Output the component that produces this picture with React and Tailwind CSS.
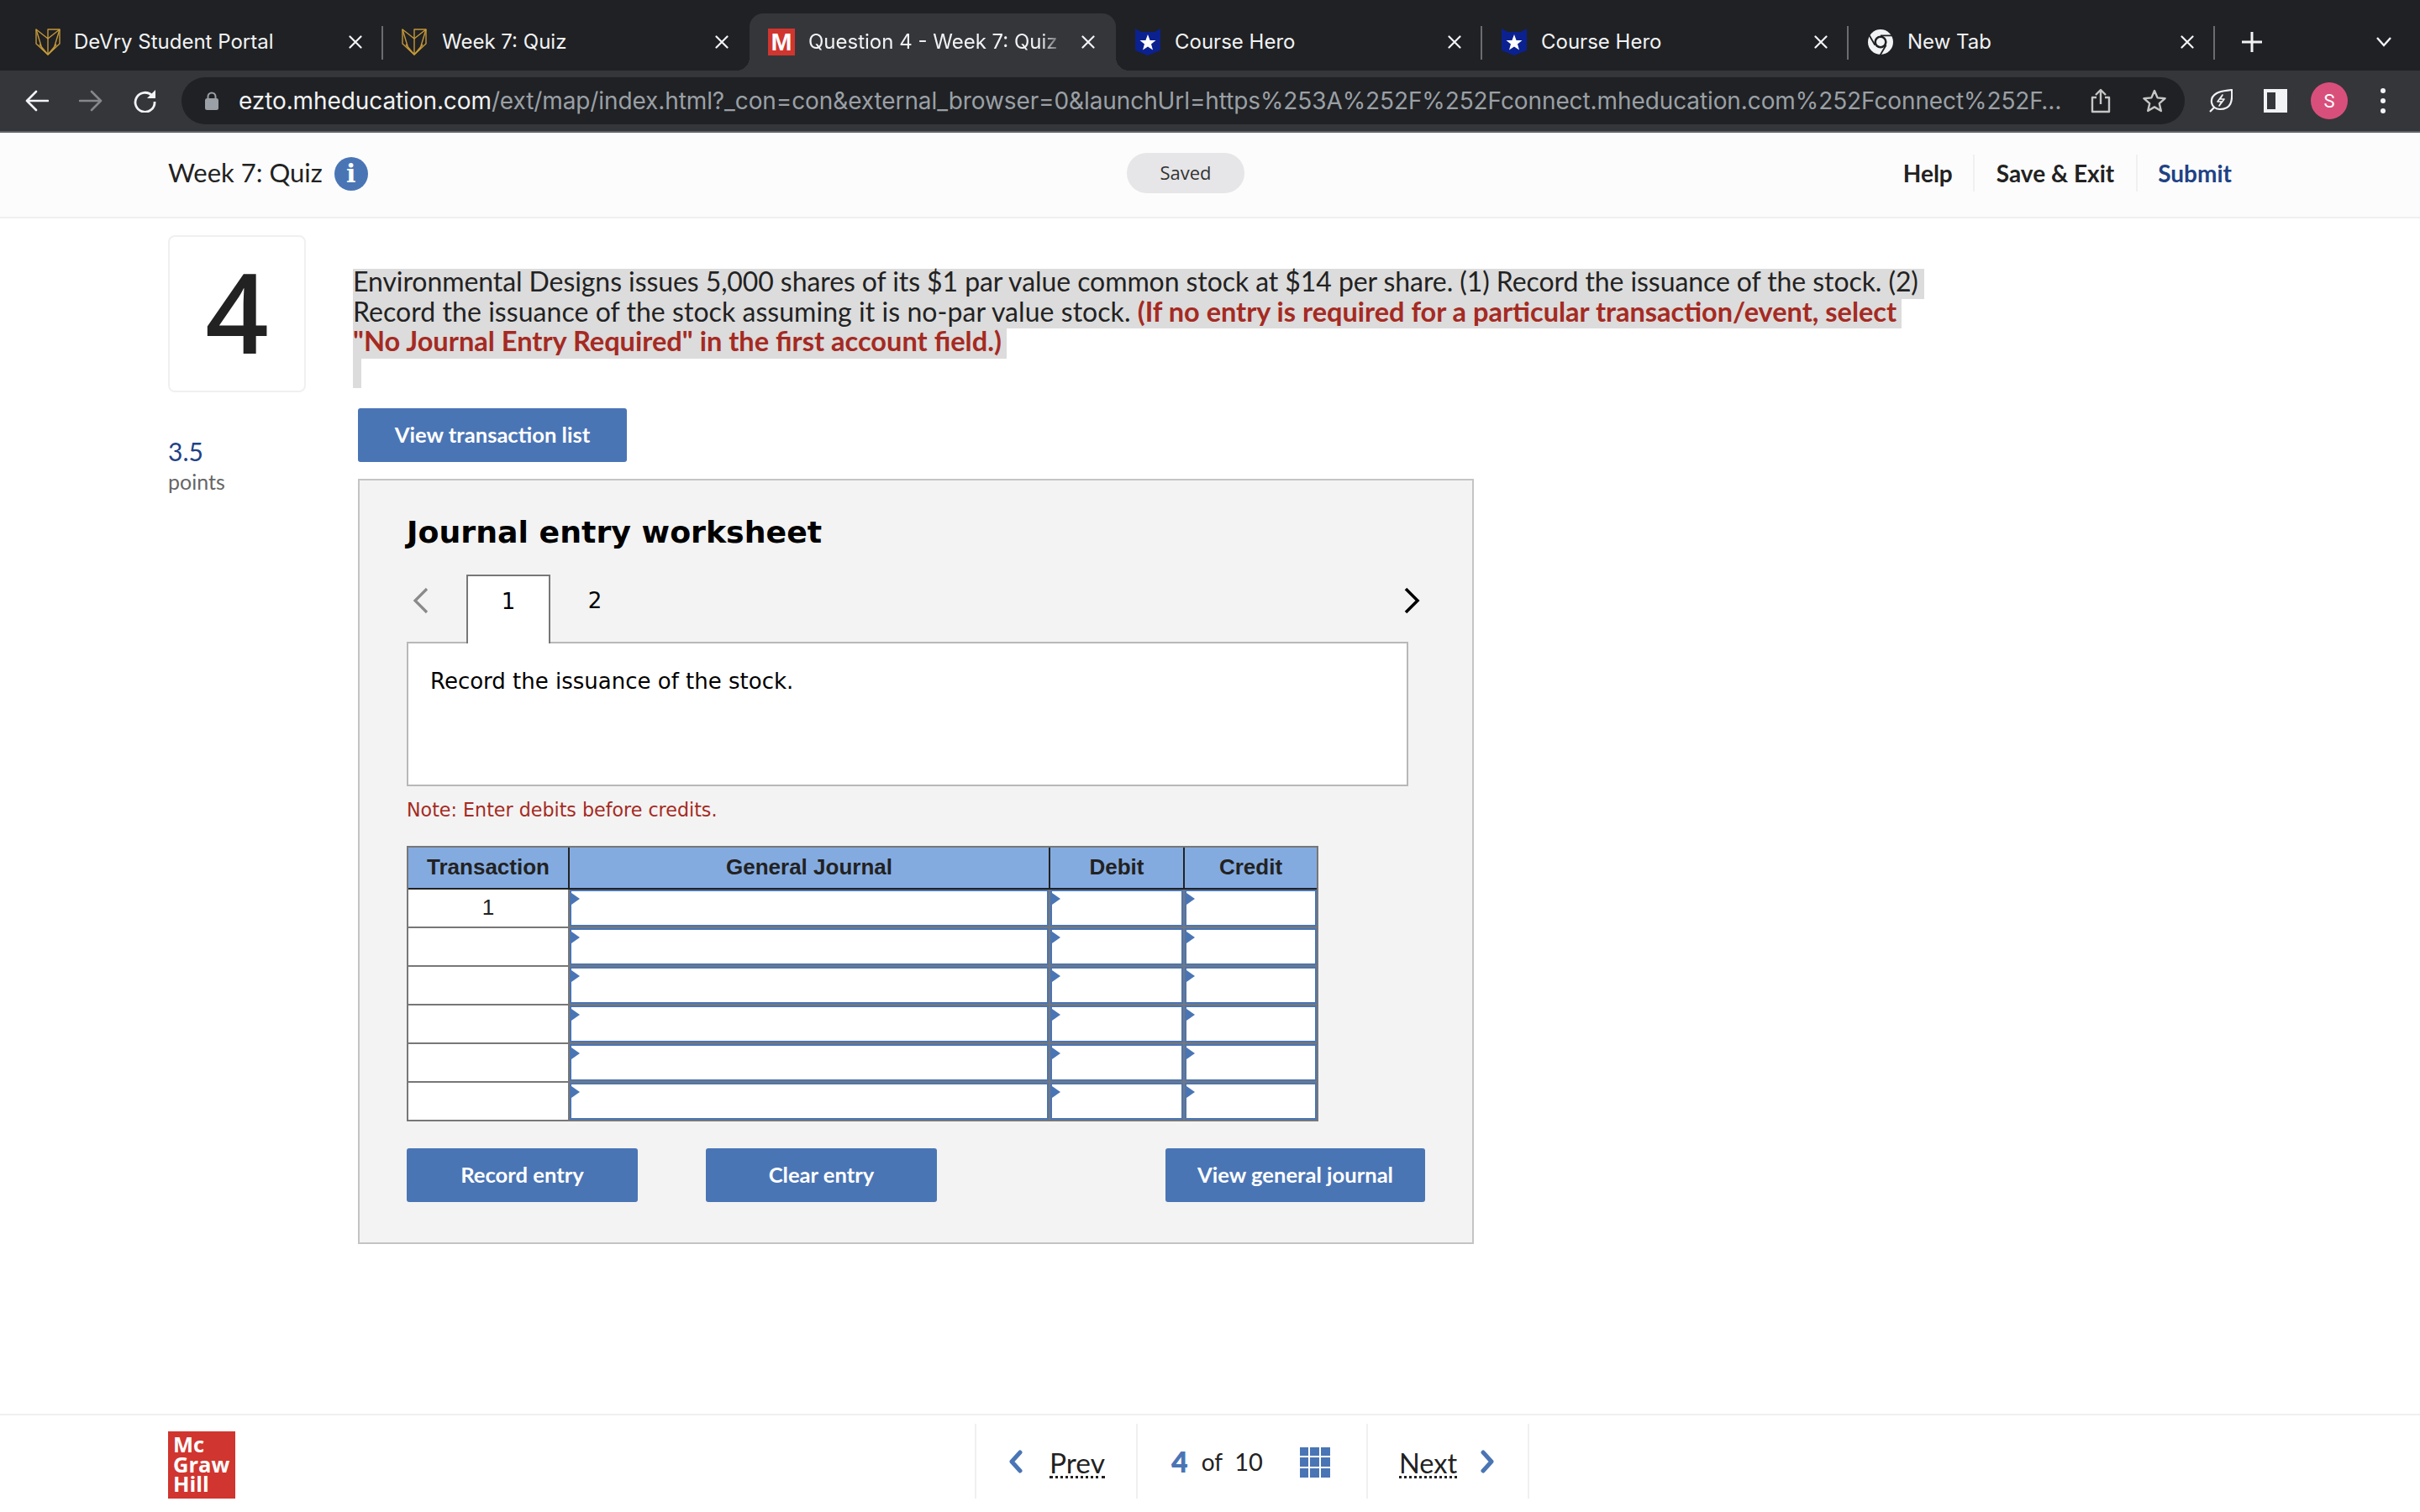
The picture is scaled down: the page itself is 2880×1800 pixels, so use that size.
const CHROME = { fontFamily: 'Inter, "Liberation Sans", sans-serif' };
const BODY = { fontFamily: 'Lato, "Open Sans", "Liberation Sans", sans-serif' };
const VERD = { fontFamily: '"DejaVu Sans", Verdana, sans-serif' };
const ARIAL = { fontFamily: '"Liberation Sans", Arial, sans-serif' };

function Devry() {
  return (
    <svg width="30" height="32" viewBox="0 0 30 32" fill="none" stroke="#c2983a" strokeWidth="1.4" strokeLinejoin="round">
      <path d="M1 1 L1 18 L15 31 L29 18 L29 1 L15 1 L15 12 Z" />
      <path d="M15 12 L15 31 M29 1 L15 12 M1 1 L8 24 L15 31 L22 24 L29 1 M5 19 L15 31 L25 19" />
    </svg>
  );
}
function MLogo() {
  return (
    <div className="w-[32px] h-[32px] bg-[#d0352f] flex items-center justify-center text-white font-bold text-[30px] leading-none" style={ARIAL}>M</div>
  );
}
function Hero() {
  return (
    <svg width="32" height="34" viewBox="0 0 32 34">
      <path d="M1 1 L8 5 L24 5 L31 1 L31 27 L16 33 L1 27 Z" fill="#0b2190" />
      <path d="M16 8 L18.6 15 L25.5 15 L20 19.4 L22 26.5 L16 22.4 L10 26.5 L12 19.4 L6.5 15 L13.4 15 Z" fill="#fff" />
    </svg>
  );
}
function ChromeIcon() {
  return (
    <svg width="32" height="32" viewBox="0 0 32 32">
      <circle cx="16" cy="16" r="15" fill="#f1f3f4" />
      <circle cx="16" cy="16" r="7.6" fill="#202124" />
      <circle cx="16" cy="16" r="5" fill="#f1f3f4" />
      <path d="M16 8.4 L29.5 8.4 M22.6 19.8 L15.6 31.5 M9.4 19.8 L2.6 8" stroke="#202124" strokeWidth="1.8" />
    </svg>
  );
}
function Close() {
  return (
    <svg width="16" height="16" viewBox="0 0 16 16" stroke="#f1f3f4" strokeWidth="2.2" strokeLinecap="round">
      <path d="M1.5 1.5 L14.5 14.5 M14.5 1.5 L1.5 14.5" />
    </svg>
  );
}

const tabs = [
  { t: 'DeVry Student Portal', i: <Devry />, sep: true, first: true },
  { t: 'Week 7: Quiz', i: <Devry />, sep: false },
  { t: 'Question 4 - Week 7: Quiz -', i: <MLogo />, sep: false, active: true },
  { t: 'Course Hero', i: <Hero />, sep: true },
  { t: 'Course Hero', i: <Hero />, sep: true },
  { t: 'New Tab', i: <ChromeIcon />, sep: true },
];

function Tab({ tab }) {
  return (
    <div className={tab.active ? 'relative w-[436px] h-[68px] flex items-center bg-[#35363a] rounded-t-[16px]' : 'relative w-[436px] h-[68px] flex items-center'}>
      {tab.active && (
        <>
          <div className="absolute bottom-0 -left-[16px] w-[16px] h-[16px] bg-[radial-gradient(circle_at_0_0,transparent_16px,#35363a_16px)]" />
          <div className="absolute bottom-0 -right-[16px] w-[16px] h-[16px] bg-[radial-gradient(circle_at_100%_0,transparent_16px,#35363a_16px)]" />
        </>
      )}
      <div className={tab.first ? 'w-[68px] pl-[22px] shrink-0 flex items-center' : 'w-[70px] pl-[22px] shrink-0 flex items-center'}>{tab.i}</div>
      <div className={tab.first ? 'w-[327px] shrink-0 whitespace-nowrap text-[#f1f3f4] text-[24px]' : 'w-[325px] shrink-0 whitespace-nowrap text-[#f1f3f4] text-[24px]'} style={{ ...CHROME, maskImage: tab.active ? 'linear-gradient(90deg,#000 85%,transparent 94%)' : undefined }}>{tab.t}</div>
      <div className="w-[16px] shrink-0 flex"><Close /></div>
      {tab.sep && <div className="absolute right-0 top-[15px] w-[2px] h-[40px] bg-[#6b6c70]" />}
    </div>
  );
}

function TabBar() {
  return (
    <div className="h-[84px] bg-[#202124] flex items-end pl-[20px] shrink-0">
      {tabs.map((t, i) => <Tab key={i} tab={t} />)}
      <div className="h-[68px] flex items-center pl-[32px]">
        <svg width="24" height="24" viewBox="0 0 24 24" stroke="#f1f3f4" strokeWidth="3"><path d="M12 0 V24 M0 12 H24" /></svg>
      </div>
      <div className="h-[68px] flex items-center pl-[135px]">
        <svg width="20" height="14" viewBox="0 0 20 14" fill="none" stroke="#f1f3f4" strokeWidth="2.4"><path d="M2 2 L10 11 L18 2" /></svg>
      </div>
    </div>
  );
}

function Toolbar() {
  return (
    <div className="h-[74px] bg-[#35363a] border-b-2 border-[#5f6368] flex items-center shrink-0">
      <div className="w-[216px] flex items-center pl-[30px] gap-[36px] shrink-0">
        <svg width="28" height="26" viewBox="0 0 28 26" fill="none" stroke="#f1f3f4" strokeWidth="2.6" strokeLinecap="round" strokeLinejoin="round"><path d="M27 13 H2 M13 2 L2 13 L13 24" /></svg>
        <svg width="28" height="26" viewBox="0 0 28 26" fill="none" stroke="#85878a" strokeWidth="2.6" strokeLinecap="round" strokeLinejoin="round"><path d="M1 13 H26 M15 2 L26 13 L15 24" /></svg>
        <svg width="28" height="28" viewBox="0 0 28 28" fill="none">
          <path d="M23 8 A11.5 11.5 0 1 0 26 15" stroke="#f1f3f4" strokeWidth="2.8" />
          <path d="M27 1 V11 H17 Z" fill="#f1f3f4" />
        </svg>
      </div>
      <div className="w-[2384px] h-[56px] rounded-full bg-[#202124] flex items-center shrink-0">
        <div className="w-[68px] pl-[28px] shrink-0 flex">
          <svg width="16" height="22" viewBox="0 0 16 22"><path d="M3.5 9 V6 a4.5 4.5 0 0 1 9 0 V9" fill="none" stroke="#9aa0a6" strokeWidth="2" /><rect y="8" width="16" height="14" rx="2.5" fill="#9aa0a6" /></svg>
        </div>
        <div className="w-[2172px] shrink-0 whitespace-nowrap text-[28px] tracking-[-0.1px] text-[#9aa0a6]" style={CHROME}>
          <span className="text-[#f1f3f4]">ezto.mheducation.com</span>/ext/map/index.html?_con=con&amp;external_browser=0&amp;launchUrl=https%253A%252F%252Fconnect.mheducation.com%252Fconnect%252F…
        </div>
        <div className="ml-[32px] flex items-center gap-[38px] shrink-0">
          <svg width="24" height="30" viewBox="0 0 24 30" fill="none" stroke="#c4c7c5" strokeWidth="2.4" strokeLinejoin="round"><path d="M7 11 H2 V28 H22 V11 H17 M12 19 V2 M6 8 L12 2 L18 8" /></svg>
          <svg width="28" height="28" viewBox="0 0 28 28" fill="none" stroke="#c4c7c5" strokeWidth="2.4" strokeLinejoin="round"><path d="M14 2 L17.6 10.4 L26.6 11.2 L19.8 17.2 L21.8 26 L14 21.4 L6.2 26 L8.2 17.2 L1.4 11.2 L10.4 10.4 Z" /></svg>
        </div>
      </div>
      <div className="ml-[29px] flex shrink-0">
        <svg width="28" height="28" viewBox="0 0 28 28" fill="none" stroke="#f1f3f4" strokeWidth="2.2" strokeLinejoin="round"><path d="M27 1 C28 15 26 24 13 24 C2 24 -1 11 9 5 C14 2 21 2 27 1 Z M1 27 L6 22" /><path d="M16 7 L10 15 H15 L12 20 L18 12 H13 Z" strokeWidth="1.6" /></svg>
      </div>
      <div className="ml-[37px] w-[28px] h-[28px] shrink-0 border-[4px] border-[#f1f3f4] border-r-[14px]" />
      <div className="ml-[28px] w-[44px] h-[44px] rounded-full bg-[#d94f7b] text-white flex items-center justify-center text-[22px] shrink-0" style={{ fontFamily: 'Roboto, sans-serif' }}>S</div>
      <div className="ml-[39px] flex flex-col gap-[6px] shrink-0">
        <div className="w-[6px] h-[6px] rounded-full bg-[#f1f3f4]" />
        <div className="w-[6px] h-[6px] rounded-full bg-[#f1f3f4]" />
        <div className="w-[6px] h-[6px] rounded-full bg-[#f1f3f4]" />
      </div>
    </div>
  );
}

function PageHeader() {
  return (
    <div className="h-[102px] bg-[#fcfcfc] border-b-2 border-[#f0f0f0] flex items-center pl-[200px] pb-[5px] shrink-0" style={BODY}>
      <div className="w-[1141px] flex items-center gap-[14px] shrink-0">
        <span className="text-[31px] text-[#222]">Week 7: Quiz</span>
        <div className="w-[40px] h-[40px] mt-[2px] rounded-full bg-[#4a75b5] flex items-center justify-center text-white text-[30px] font-bold leading-none" style={{ fontFamily: '"DejaVu Serif", serif' }}>i</div>
      </div>
      <div className="w-[140px] h-[48px] rounded-full bg-[#e6e5e7] flex items-center justify-center text-[22px] text-[#333] shrink-0" style={{ fontFamily: '"Open Sans", sans-serif' }}>Saved</div>
      <div className="ml-auto mr-[224px] flex items-center font-bold text-[28px] text-[#222]">
        <span className="h-[44px] flex items-center pr-[24px] border-r-2 border-[#f0f0f0]">Help</span>
        <span className="h-[44px] flex items-center px-[26px] border-r-2 border-[#f0f0f0]">Save &amp; Exit</span>
        <span className="pl-[24px] text-[#1f4285]">Submit</span>
      </div>
    </div>
  );
}

function Btn({ w, children }) {
  return <div className={`${w} h-[64px] bg-[#4a75b5] rounded-[3px] flex items-center justify-center text-white font-bold text-[25.6px] shrink-0`} style={BODY}>{children}</div>;
}

function Tri() {
  return (
    <svg className="absolute left-0 top-[2px]" width="10" height="14" viewBox="0 0 10 14"><path d="M0 0 L10 7 L0 14 Z" fill="#4a75b5" /></svg>
  );
}
function Input({ w }) {
  return (
    <div className={`relative ${w} h-[44px] bg-white border-2 border-[#4a75b5] shrink-0`}><Tri /></div>
  );
}

function JournalTable() {
  const rows = ['1', '', '', '', '', ''];
  return (
    <div className="w-[1085px] border-x-2 border-t-2 border-[#777]" style={ARIAL}>
      <div className="flex h-[50px] pt-0 bg-[#84abe0] border-b-2 border-[#222] font-bold text-[26px] text-[#222]">
        <div className="w-[192px] border-r-2 border-[#222] flex items-center justify-center shrink-0">Transaction</div>
        <div className="w-[572px] border-r-2 border-[#222] flex items-center justify-center shrink-0">General Journal</div>
        <div className="w-[160px] border-r-2 border-[#222] flex items-center justify-center shrink-0">Debit</div>
        <div className="flex-1 flex items-center justify-center">Credit</div>
      </div>
      {rows.map((r, i) => (
        <div key={i} className="flex h-[46px] border-b-2 border-[#777]">
          <div className="w-[192px] bg-white border-r-2 border-[#777] flex items-center justify-center text-[26px] text-[#222] shrink-0">{r}</div>
          <Input w="w-[570px]" />
          <div className="w-[2px] bg-[#777]" />
          <Input w="w-[158px]" />
          <div className="w-[2px] bg-[#777]" />
          <Input w="w-[157px]" />
        </div>
      ))}
    </div>
  );
}

function Worksheet() {
  return (
    <div className="ml-[6px] mt-[20px] w-[1328px] h-[911px] bg-[#f3f3f3] border-2 border-[#c4c4c4] pl-[56px]">
      <h2 className="h-[58px] mt-[34px] flex items-center font-bold text-[36.3px] text-black" style={VERD}>Journal entry worksheet</h2>
      <div className="mt-[20px] h-[82px] w-[1192px] flex items-stretch relative z-10 -mb-[2px]">
        <div className="w-[71px] pl-[7px] pb-[20px] flex items-center shrink-0">
          <svg width="20" height="32" viewBox="0 0 20 32" fill="none" stroke="#8a8a8a" strokeWidth="3.2"><path d="M17 2 L3 16 L17 30" /></svg>
        </div>
        <div className="w-[100px] bg-white border-x-2 border-t-2 border-[#777] pb-[18px] flex items-center justify-center text-[26px] text-black shrink-0" style={VERD}>1</div>
        <div className="w-[106px] pb-[18px] flex items-center justify-center text-[26px] text-black shrink-0" style={VERD}>2</div>
        <div className="ml-auto -mr-[14px] pb-[20px] flex items-center">
          <svg width="20" height="32" viewBox="0 0 20 32" fill="none" stroke="#000" strokeWidth="3.6"><path d="M3 2 L17 16 L3 30" /></svg>
        </div>
      </div>
      <div className="w-[1192px] h-[172px] bg-white border-2 border-[#b8b8b8] pl-[26px] pt-[27px] text-[26px] leading-[36px] text-black" style={VERD}>Record the issuance of the stock.</div>
      <div className="h-[26px] mt-[16px] flex items-center text-[22.2px] text-[#a52a22]" style={VERD}>Note: Enter debits before credits.</div>
      <div className="mt-[29px]"><JournalTable /></div>
      <div className="mt-[32px] flex w-[1212px]">
        <Btn w="w-[275px]">Record entry</Btn>
        <div className="w-[81px]" />
        <Btn w="w-[275px]">Clear entry</Btn>
        <div className="flex-1" />
        <Btn w="w-[309px]">View general journal</Btn>
      </div>
    </div>
  );
}

function Main() {
  return (
    <div className="flex-1 bg-white flex items-start pl-[200px] min-h-0" style={BODY}>
      <div className="w-[220px] pt-[20px] shrink-0">
        <div className="w-[164px] h-[187px] pb-[8px] rounded-[8px] border-2 border-[#f0f0f0] flex items-center justify-center text-[132px] font-semibold leading-none text-[#222]" style={{ fontFamily: '"Open Sans", sans-serif' }}>4</div>
        <div className="mt-[52px] text-[30px] leading-[36px] text-[#1f4285]">3.5</div>
        <div className="text-[25px] leading-[36px] text-[#666]">points</div>
      </div>
      <div className="pt-[60px]">
        <div className="text-[32px] leading-[30px] text-[#222]">
          <div className="w-fit h-[35.5px] bg-[#dcdcdc] whitespace-nowrap pr-[7px] tracking-[-0.08px]">Environmental Designs issues 5,000 shares of its $1 par value common stock at $14 per share. (1) Record the issuance of the stock. (2)</div>
          <div className="w-fit h-[35.5px] bg-[#dcdcdc] whitespace-nowrap pr-[6px]"><span className="tracking-[0.05px]">Record the issuance of the stock assuming it is no-par value stock. </span><b className="text-[#a52a22] text-[32.5px]">(If no entry is required for a particular transaction/event, select</b></div>
          <div className="w-fit h-[35.5px] bg-[#dcdcdc] whitespace-nowrap pr-[6px]"><b className="text-[#a52a22] text-[32.6px]">"No Journal Entry Required" in the first account field.)</b></div>
          <div className="w-[10px] h-[35px] bg-[#dcdcdc]" />
        </div>
        <div className="ml-[6px] mt-[24px]"><Btn w="w-[320px]">View transaction list</Btn></div>
        <Worksheet />
      </div>
    </div>
  );
}

function Footer() {
  return (
    <div className="h-[117px] bg-white border-t-2 border-[#f0f0f0] pl-[200px] pt-[10px] flex items-start shrink-0" style={BODY}>
      <div className="mt-[9px] w-[80px] h-[80px] bg-[#d0352f] pl-[6px] pt-[4px] text-white font-bold text-[25.5px] leading-[23.5px] shrink-0" style={{ fontFamily: '"Open Sans", sans-serif' }}>
        <div>Mc</div><div>Graw</div><div>Hill</div>
      </div>
      <div className="ml-[880px] h-[89px] flex items-center text-[33.5px] text-[#222]">
        <div className="w-[194px] h-full border-x-2 border-[#f0f0f0] flex items-center pl-[38px]">
          <svg width="18" height="28" viewBox="0 0 18 28" fill="none" stroke="#4a75b5" strokeWidth="5" strokeLinecap="round" strokeLinejoin="round"><path d="M14 3 L4 14 L14 25" /></svg>
          <span className="ml-[31px] mt-[6px] leading-[31px] border-b-[3px] border-dotted border-[#222]">Prev</span>
        </div>
        <div className="w-[272px] h-full flex items-center pl-[40px]">
          <b className="text-[#4a75b5] text-[34px] font-extrabold">4</b>
          <span className="ml-[16px] text-[28px]">of</span>
          <span className="ml-[14px] text-[29px]">10</span>
          <div className="ml-[44px] mt-[2px] grid grid-cols-3 gap-[2px] w-[36px] h-[36px]">
            {[...Array(9)].map((_, i) => <div key={i} className="bg-[#4a75b5]" />)}
          </div>
        </div>
        <div className="w-[194px] h-full border-x-2 border-[#f0f0f0] flex items-center pl-[37px]">
          <span className="mt-[6px] leading-[31px] text-[32.5px] border-b-[3px] border-dotted border-[#222]">Next</span>
          <svg className="ml-[27px]" width="18" height="28" viewBox="0 0 18 28" fill="none" stroke="#4a75b5" strokeWidth="5" strokeLinecap="round" strokeLinejoin="round"><path d="M4 3 L14 14 L4 25" /></svg>
        </div>
      </div>
    </div>
  );
}

export default function App() {
  return (
    <div className="w-[2880px] h-[1800px] flex flex-col overflow-hidden bg-white">
      <TabBar />
      <Toolbar />
      <PageHeader />
      <Main />
      <Footer />
    </div>
  );
}
